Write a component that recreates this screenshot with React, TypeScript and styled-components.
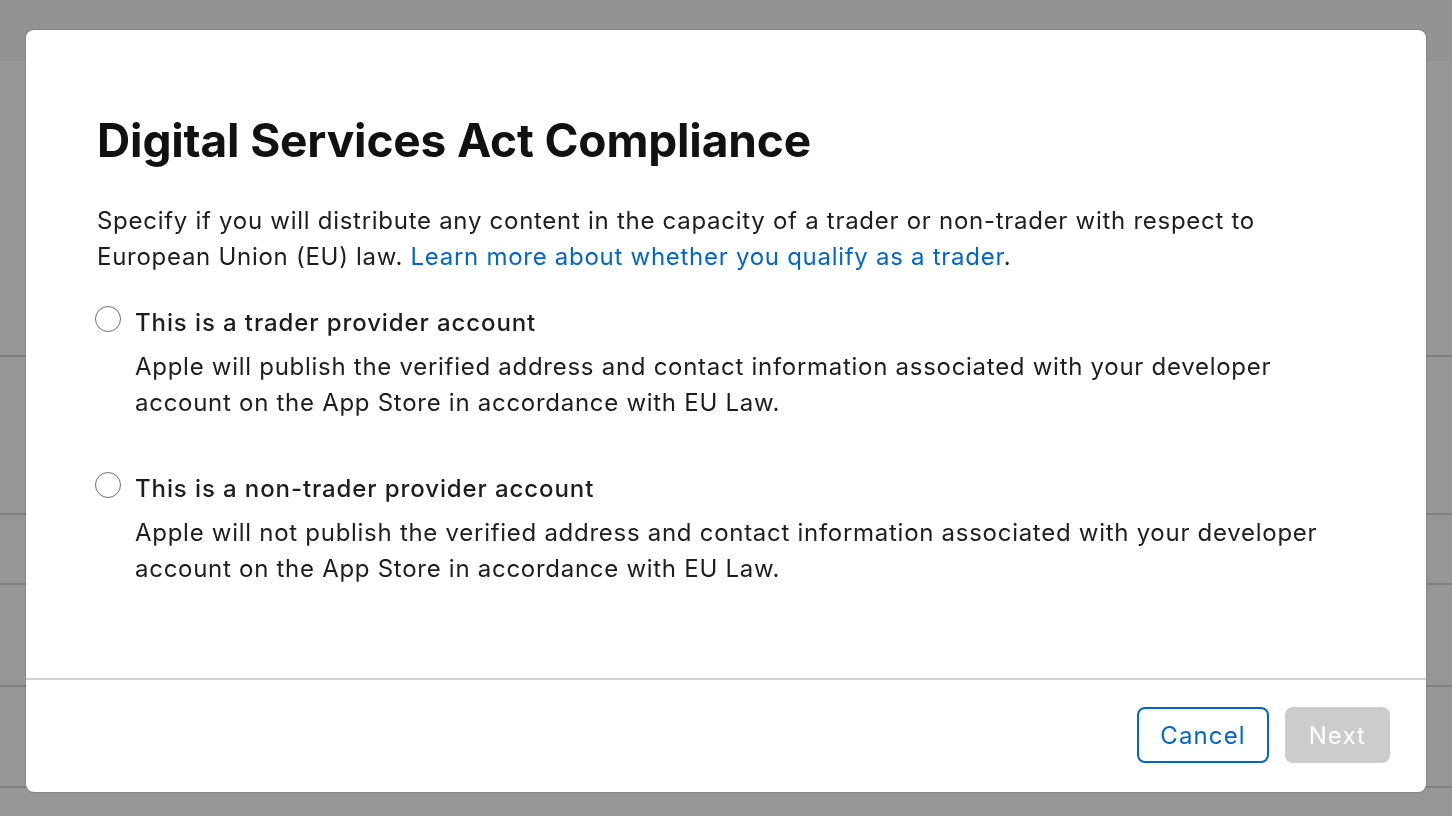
import React from "react";
import styled, { createGlobalStyle } from "styled-components";

const Global = createGlobalStyle`
  html, body { margin: 0; padding: 0; }
  body {
    font-family: Inter, "Noto Sans", "Liberation Sans", sans-serif;
    background: #fff;
    -webkit-font-smoothing: antialiased;
  }
  * { box-sizing: border-box; }
`;

const Page = styled.div`
  width: 1452px;
  height: 816px;
  overflow: hidden;
  display: flex;
  flex-direction: column;
  background: #fbfbfd;
`;

const PageHeader = styled.div`
  height: 61px;
  flex: none;
  background: #f5f5f7;
`;

const PageRow = styled.div<{ $h: number }>`
  height: ${(p) => p.$h}px;
  flex: none;
  border-bottom: 2px solid #d6d6d6;
`;

const Overlay = styled.div`
  position: fixed;
  inset: 0;
  background: rgba(0, 0, 0, 0.4);
  display: flex;
  align-items: flex-start;
  justify-content: center;
  padding-top: 30px;
`;

const Modal = styled.div`
  width: 1400px;
  height: 762px;
  background: #fff;
  border-radius: 8px;
  box-shadow: 0 0 2px rgba(0, 0, 0, 0.35);
  display: flex;
  flex-direction: column;
  overflow: hidden;
`;

const Body = styled.div`
  flex: 1;
  padding: 82px 71px 0 71px;
  display: flex;
  flex-direction: column;
`;

const Title = styled.h1`
  margin: 0;
  font-size: 46px;
  line-height: 56px;
  font-weight: 700;
  color: #111;
  letter-spacing: -0.15px;
`;

const Intro = styled.p`
  margin: 35px 0 0 0;
  font-size: 24px;
  line-height: 36px;
  color: #1d1d1f;
  font-weight: 400;
  letter-spacing: 0.72px;
`;

const Link = styled.a`
  color: #0066cc;
  text-decoration: none;
`;

const Options = styled.div`
  display: flex;
  flex-direction: column;
  gap: 50px;
  margin-top: 30px;
`;

const Option = styled.label`
  display: grid;
  grid-template-columns: 26px 1fr;
  column-gap: 12px;
  align-items: start;
  cursor: pointer;
`;

const Radio = styled.span`
  width: 26px;
  height: 26px;
  margin-top: 1px;
  margin-left: -2px;
  border-radius: 50%;
  border: 1.5px solid #6e6e73;
  background: #fff;
`;

const OptionText = styled.div`
  display: flex;
  flex-direction: column;
  gap: 8px;
`;

const OptionLabel = styled.span`
  font-size: 24px;
  line-height: 36px;
  font-weight: 500;
  color: #1d1d1f;
  letter-spacing: 0.9px;
`;

const OptionDesc = styled.span`
  font-size: 24px;
  line-height: 36px;
  font-weight: 400;
  color: #1d1d1f;
  letter-spacing: 0.72px;
`;

const Divider = styled.div`
  height: 2px;
  background: #d2d2d7;
  flex: none;
`;

const Footer = styled.div`
  height: 112px;
  flex: none;
  display: flex;
  justify-content: flex-end;
  align-items: flex-start;
  gap: 16px;
  padding: 27px 36px 0 0;
`;

const Button = styled.button<{ $primary?: boolean }>`
  height: 56px;
  padding: 0 ${(p) => (p.$primary ? 22 : 21)}px;
  border-radius: 8px;
  font-family: inherit;
  font-size: 24px;
  font-weight: 400;
  letter-spacing: 1.1px;
  border: 2px solid ${(p) => (p.$primary ? "transparent" : "#0066cc")};
  background: ${(p) => (p.$primary ? "#cccccc" : "#fff")};
  color: ${(p) => (p.$primary ? "#fff" : "#0066cc")};
  cursor: ${(p) => (p.$primary ? "default" : "pointer")};
`;

export default function App() {
  return (
    <>
      <Global />
      <Page>
        <PageHeader />
        <PageRow $h={296} />
        <PageRow $h={158} />
        <PageRow $h={70} />
        <PageRow $h={102} />
        <PageRow $h={101} />
      </Page>
      <Overlay>
        <Modal role="dialog" aria-modal="true">
          <Body>
            <Title>Digital Services Act Compliance</Title>
            <Intro>
              Specify if you will distribute any content in the capacity of a trader or non-trader with respect to
              European Union (EU) law. <Link href="#">Learn more about whether you qualify as a trader</Link>.
            </Intro>
            <Options>
              <Option>
                <Radio />
                <OptionText>
                  <OptionLabel>This is a trader provider account</OptionLabel>
                  <OptionDesc>
                    Apple will publish the verified address and contact information associated with your developer
                    account on the App Store in accordance with EU Law.
                  </OptionDesc>
                </OptionText>
              </Option>
              <Option>
                <Radio />
                <OptionText>
                  <OptionLabel>This is a non-trader provider account</OptionLabel>
                  <OptionDesc>
                    Apple will not publish the verified address and contact information associated with your
                    developer account on the App Store in accordance with EU Law.
                  </OptionDesc>
                </OptionText>
              </Option>
            </Options>
          </Body>
          <Divider />
          <Footer>
            <Button>Cancel</Button>
            <Button $primary disabled>
              Next
            </Button>
          </Footer>
        </Modal>
      </Overlay>
    </>
  );
}
